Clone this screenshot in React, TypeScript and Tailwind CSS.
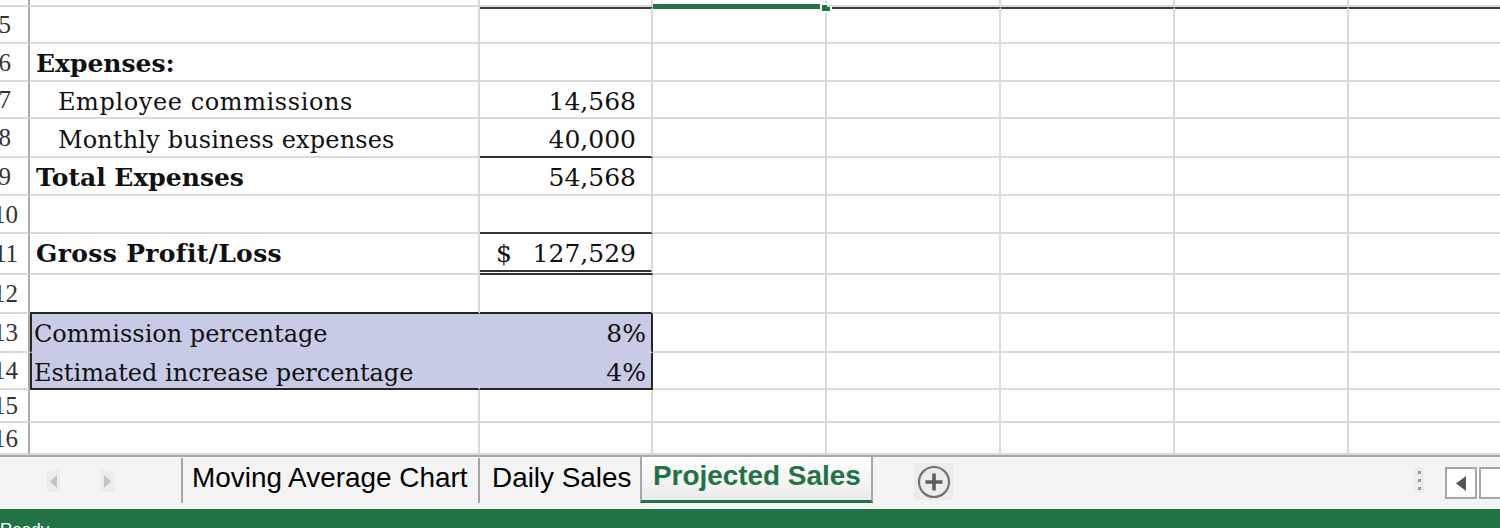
import React from "react";

const TXT = "font-['DejaVu_Serif',serif] text-[24px] leading-none text-[#111] whitespace-nowrap";
const BOLD = "font-['DejaVu_Serif',serif] text-[25px] font-bold leading-none text-[#111] whitespace-nowrap";
const NUM = "font-['DejaVu_Serif',serif] text-[25px] leading-none text-[#111] whitespace-nowrap";
const TAB = "font-['Liberation_Sans',Arial,sans-serif] text-[27.9px] leading-none whitespace-nowrap";

type CellProps = {
  w: string;
  r?: string;
  b?: string;
  bw?: string;
  t?: string;
  extra?: string;
  children?: React.ReactNode;
};

function Cell({
  w,
  r = "border-r-[#dadada]",
  b = "border-b-[#dadada]",
  bw = "border-b-2",
  t = "",
  extra = "bg-white",
  children,
}: CellProps) {
  return (
    <div className={`relative shrink-0 h-full border-r-2 ${bw} ${w} ${r} ${b} ${t} ${extra}`}>
      {children}
    </div>
  );
}

function Head({ n }: { n?: number }) {
  const two = n !== undefined && n >= 10;
  return (
    <div className="shrink-0 h-full w-[30px] border-r-2 border-b-2 border-r-[#a9a9a9] border-b-[#dadada] bg-white overflow-hidden flex items-center justify-end">
      {n !== undefined && (
        <span
          className={`shrink-0 font-['Liberation_Serif',serif] text-[25px] leading-none text-[#333] whitespace-nowrap ${
            two ? "pr-[10px]" : "pr-[17px]"
          }`}
        >
          {n}
        </span>
      )}
    </div>
  );
}

function Rest({ t = "" }: { t?: string }) {
  return (
    <>
      <Cell w="w-[174px]" t={t} />
      <Cell w="w-[174px]" t={t} />
      <Cell w="w-[174px]" t={t} />
      <Cell w="w-[174px]" t={t} />
    </>
  );
}

function Plain({ h, n }: { h: string; n: number }) {
  return (
    <div className={`flex shrink-0 ${h}`}>
      <Head n={n} />
      <Cell w="w-[450px]" />
      <Cell w="w-[173px]" />
      <Cell w="w-[174px]" />
      <Rest />
    </div>
  );
}

const DARK_T = "border-t-2 border-t-[#3d3d3d]";

export default function App() {
  return (
    <div className="w-[1500px] h-[528px] overflow-hidden flex flex-col bg-white">
      {/* Sheet grid */}
      <div className="h-[455px] shrink-0 overflow-hidden flex flex-col">
        {/* row 4 (sliver) */}
        <div className="flex shrink-0 h-[7px] relative z-10">
          <Head />
          <Cell w="w-[450px]" />
          <Cell w="w-[173px]" />
          <Cell w="w-[174px]" b="border-b-[#217346]" bw="border-b-[3px]">
            <div className="absolute left-[167px] top-[3px] w-[12px] h-[10px] border-2 border-white bg-[#217346]" />
          </Cell>
          <Rest />
        </div>

        {/* row 5 */}
        <div className="flex shrink-0 h-[37px]">
          <Head n={5} />
          <Cell w="w-[450px]" />
          <Cell w="w-[173px]" t={DARK_T} />
          <Cell w="w-[174px]" t="border-t-2 border-t-[#217346]" />
          <Rest t={DARK_T} />
        </div>

        {/* row 6 */}
        <div className="flex shrink-0 h-[38px]">
          <Head n={6} />
          <Cell w="w-[450px]">
            <div className="flex h-full items-end pl-[6px] pb-[4px]">
              <span className={BOLD}>Expenses:</span>
            </div>
          </Cell>
          <Cell w="w-[173px]" />
          <Cell w="w-[174px]" />
          <Rest />
        </div>

        {/* row 7 */}
        <div className="flex shrink-0 h-[37px]">
          <Head n={7} />
          <Cell w="w-[450px]">
            <div className="flex h-full items-end pl-[28px] pb-[3px]">
              <span className={`${TXT} tracking-[0.6px]`}>Employee commissions</span>
            </div>
          </Cell>
          <Cell w="w-[173px]">
            <div className="flex h-full items-end justify-end pr-[15px] pb-[3px]">
              <span className={NUM}>14,568</span>
            </div>
          </Cell>
          <Cell w="w-[174px]" />
          <Rest />
        </div>

        {/* row 8 */}
        <div className="flex shrink-0 h-[39px]">
          <Head n={8} />
          <Cell w="w-[450px]">
            <div className="flex h-full items-end pl-[28px] pb-[4px]">
              <span className={`${TXT} tracking-[0.15px]`}>Monthly business expenses</span>
            </div>
          </Cell>
          <Cell w="w-[173px]" b="border-b-[#333333]">
            <div className="flex h-full items-end justify-end pr-[15px] pb-[4px]">
              <span className={NUM}>40,000</span>
            </div>
          </Cell>
          <Cell w="w-[174px]" />
          <Rest />
        </div>

        {/* row 9 */}
        <div className="flex shrink-0 h-[38px]">
          <Head n={9} />
          <Cell w="w-[450px]">
            <div className="flex h-full items-end pl-[6px] pb-[4px]">
              <span className={BOLD}>Total Expenses</span>
            </div>
          </Cell>
          <Cell w="w-[173px]">
            <div className="flex h-full items-end justify-end pr-[15px] pb-[4px]">
              <span className={NUM}>54,568</span>
            </div>
          </Cell>
          <Cell w="w-[174px]" />
          <Rest />
        </div>

        {/* row 10 */}
        <div className="flex shrink-0 h-[38px]">
          <Head n={10} />
          <Cell w="w-[450px]" />
          <Cell w="w-[173px]" b="border-b-[#333333]" />
          <Cell w="w-[174px]" />
          <Rest />
        </div>

        {/* row 11 */}
        <div className="flex shrink-0 h-[41px]">
          <Head n={11} />
          <Cell w="w-[450px]">
            <div className="flex h-full items-end pl-[6px] pb-[7px]">
              <span className={`${BOLD} tracking-[0.35px]`}>Gross Profit/Loss</span>
            </div>
          </Cell>
          <Cell w="w-[173px]" b="border-b-[#333333] border-double" bw="border-b-[5px]">
            <div className="flex h-full items-end justify-between pl-[16px] pr-[15px] pb-[4px]">
              <span className={NUM}>$</span>
              <span className={NUM}>127,529</span>
            </div>
          </Cell>
          <Cell w="w-[174px]" />
          <Rest />
        </div>

        {/* row 12 */}
        <div className="flex shrink-0 h-[39px]">
          <Head n={12} />
          <Cell w="w-[450px]" b="border-b-[#262626]" />
          <Cell w="w-[173px]" b="border-b-[#262626]" />
          <Cell w="w-[174px]" />
          <Rest />
        </div>

        {/* row 13 */}
        <div className="flex shrink-0 h-[39px]">
          <Head n={13} />
          <Cell
            w="w-[450px]"
            r="border-r-[#c8cbe6]"
            b="border-b-[#c8cbe6]"
            extra="bg-[#c8cbe6] border-l-2 border-l-[#262626]"
          >
            <div className="flex h-full items-end pl-[2px] pb-[5px]">
              <span className={TXT}>Commission percentage</span>
            </div>
          </Cell>
          <Cell w="w-[173px]" r="border-r-[#262626]" b="border-b-[#c8cbe6]" extra="bg-[#c8cbe6]">
            <div className="flex h-full items-end justify-end pr-[5px] pb-[5px]">
              <span className={NUM}>8%</span>
            </div>
          </Cell>
          <Cell w="w-[174px]" />
          <Rest />
        </div>

        {/* row 14 */}
        <div className="flex shrink-0 h-[37px]">
          <Head n={14} />
          <Cell
            w="w-[450px]"
            r="border-r-[#c8cbe6]"
            b="border-b-[#262626]"
            extra="bg-[#c8cbe6] border-l-2 border-l-[#262626]"
          >
            <div className="flex h-full items-end pl-[2px] pb-[3px]">
              <span className={TXT}>Estimated increase percentage</span>
            </div>
          </Cell>
          <Cell w="w-[173px]" r="border-r-[#262626]" b="border-b-[#262626]" extra="bg-[#c8cbe6]">
            <div className="flex h-full items-end justify-end pr-[5px] pb-[3px]">
              <span className={NUM}>4%</span>
            </div>
          </Cell>
          <Cell w="w-[174px]" />
          <Rest />
        </div>

        <Plain h="h-[33px]" n={15} />
        <Plain h="h-[32px]" n={16} />
      </div>

      {/* Sheet tabs bar */}
      <div className="h-[54px] shrink-0 border-t-2 border-t-[#a9a9a9] bg-[#f4f4f4] flex items-start overflow-hidden">
        {/* navigation arrows */}
        <div className="w-[181px] shrink-0 h-[46px] flex items-start">
          <div className="ml-[47px] mt-[13px] w-[13px] h-[22px] bg-[#ececec] flex items-center justify-center">
            <svg width="7" height="13" viewBox="0 0 7 13">
              <polygon points="7,0 7,13 0,6.5" fill="#c4c4c4" />
            </svg>
          </div>
          <div className="ml-[41px] mt-[13px] w-[13px] h-[22px] bg-[#ececec] flex items-center justify-center">
            <svg width="7" height="13" viewBox="0 0 7 13">
              <polygon points="0,0 0,13 7,6.5" fill="#c4c4c4" />
            </svg>
          </div>
        </div>

        {/* tab 1 */}
        <div className="w-[297px] shrink-0 mt-[1px] h-[45px] border-l-2 border-l-[#a4a4a4] pl-[9px] pt-[6px]">
          <span className={`${TAB} text-black`}>Moving Average Chart</span>
        </div>

        {/* tab 2 */}
        <div className="w-[162px] shrink-0 mt-[1px] h-[45px] border-l-2 border-l-[#a4a4a4] pl-[12px] pt-[6px]">
          <span className={`${TAB} text-black`}>Daily Sales</span>
        </div>

        {/* active tab */}
        <div className="w-[233px] shrink-0 h-[46px] border-l-2 border-r-2 border-l-[#a8a8a8] border-r-[#a8a8a8] border-b-[3px] border-b-[#217346] bg-linear-to-b from-white to-[#ebebeb] pl-[11px] pt-[5px]">
          <span className={`${TAB} font-bold text-[#217346]`}>Projected Sales</span>
        </div>

        {/* add sheet */}
        <div className="ml-[41px] mt-[6px] w-[39px] h-[37px] shrink-0 bg-[#ececec] flex items-center justify-center">
          <svg width="34" height="34" viewBox="0 0 34 34">
            <circle cx="17" cy="17" r="15" fill="none" stroke="#737373" strokeWidth="2.2" />
            <path d="M17 8.5V25.5M8.5 17H25.5" stroke="#5e5e5e" strokeWidth="3.6" />
          </svg>
        </div>

        {/* split handle dots */}
        <div className="ml-[461px] mt-[10px] w-[10px] h-[26px] shrink-0 bg-[#ececec] flex flex-col items-center justify-center gap-[5px]">
          <div className="w-[3px] h-[3px] bg-[#9a9a9a]" />
          <div className="w-[3px] h-[3px] bg-[#9a9a9a]" />
          <div className="w-[3px] h-[3px] bg-[#9a9a9a]" />
        </div>

        {/* scroll buttons */}
        <div className="ml-[21px] mt-[10px] h-[32px] shrink-0 flex gap-[2px] bg-white">
          <div className="w-[32px] h-full border-2 border-[#a6a6a6] flex items-center justify-center">
            <svg width="10" height="15" viewBox="0 0 10 15">
              <polygon points="10,0 10,15 0,7.5" fill="#555555" />
            </svg>
          </div>
          <div className="w-[40px] h-full border-2 border-[#a6a6a6]" />
        </div>
      </div>

      {/* status bar */}
      <div className="h-[19px] shrink-0 bg-[#217346] overflow-hidden pt-[12px]">
        <span className="block font-['Liberation_Sans',Arial,sans-serif] text-[17px] leading-none text-white whitespace-nowrap">
          Ready
        </span>
      </div>
    </div>
  );
}
